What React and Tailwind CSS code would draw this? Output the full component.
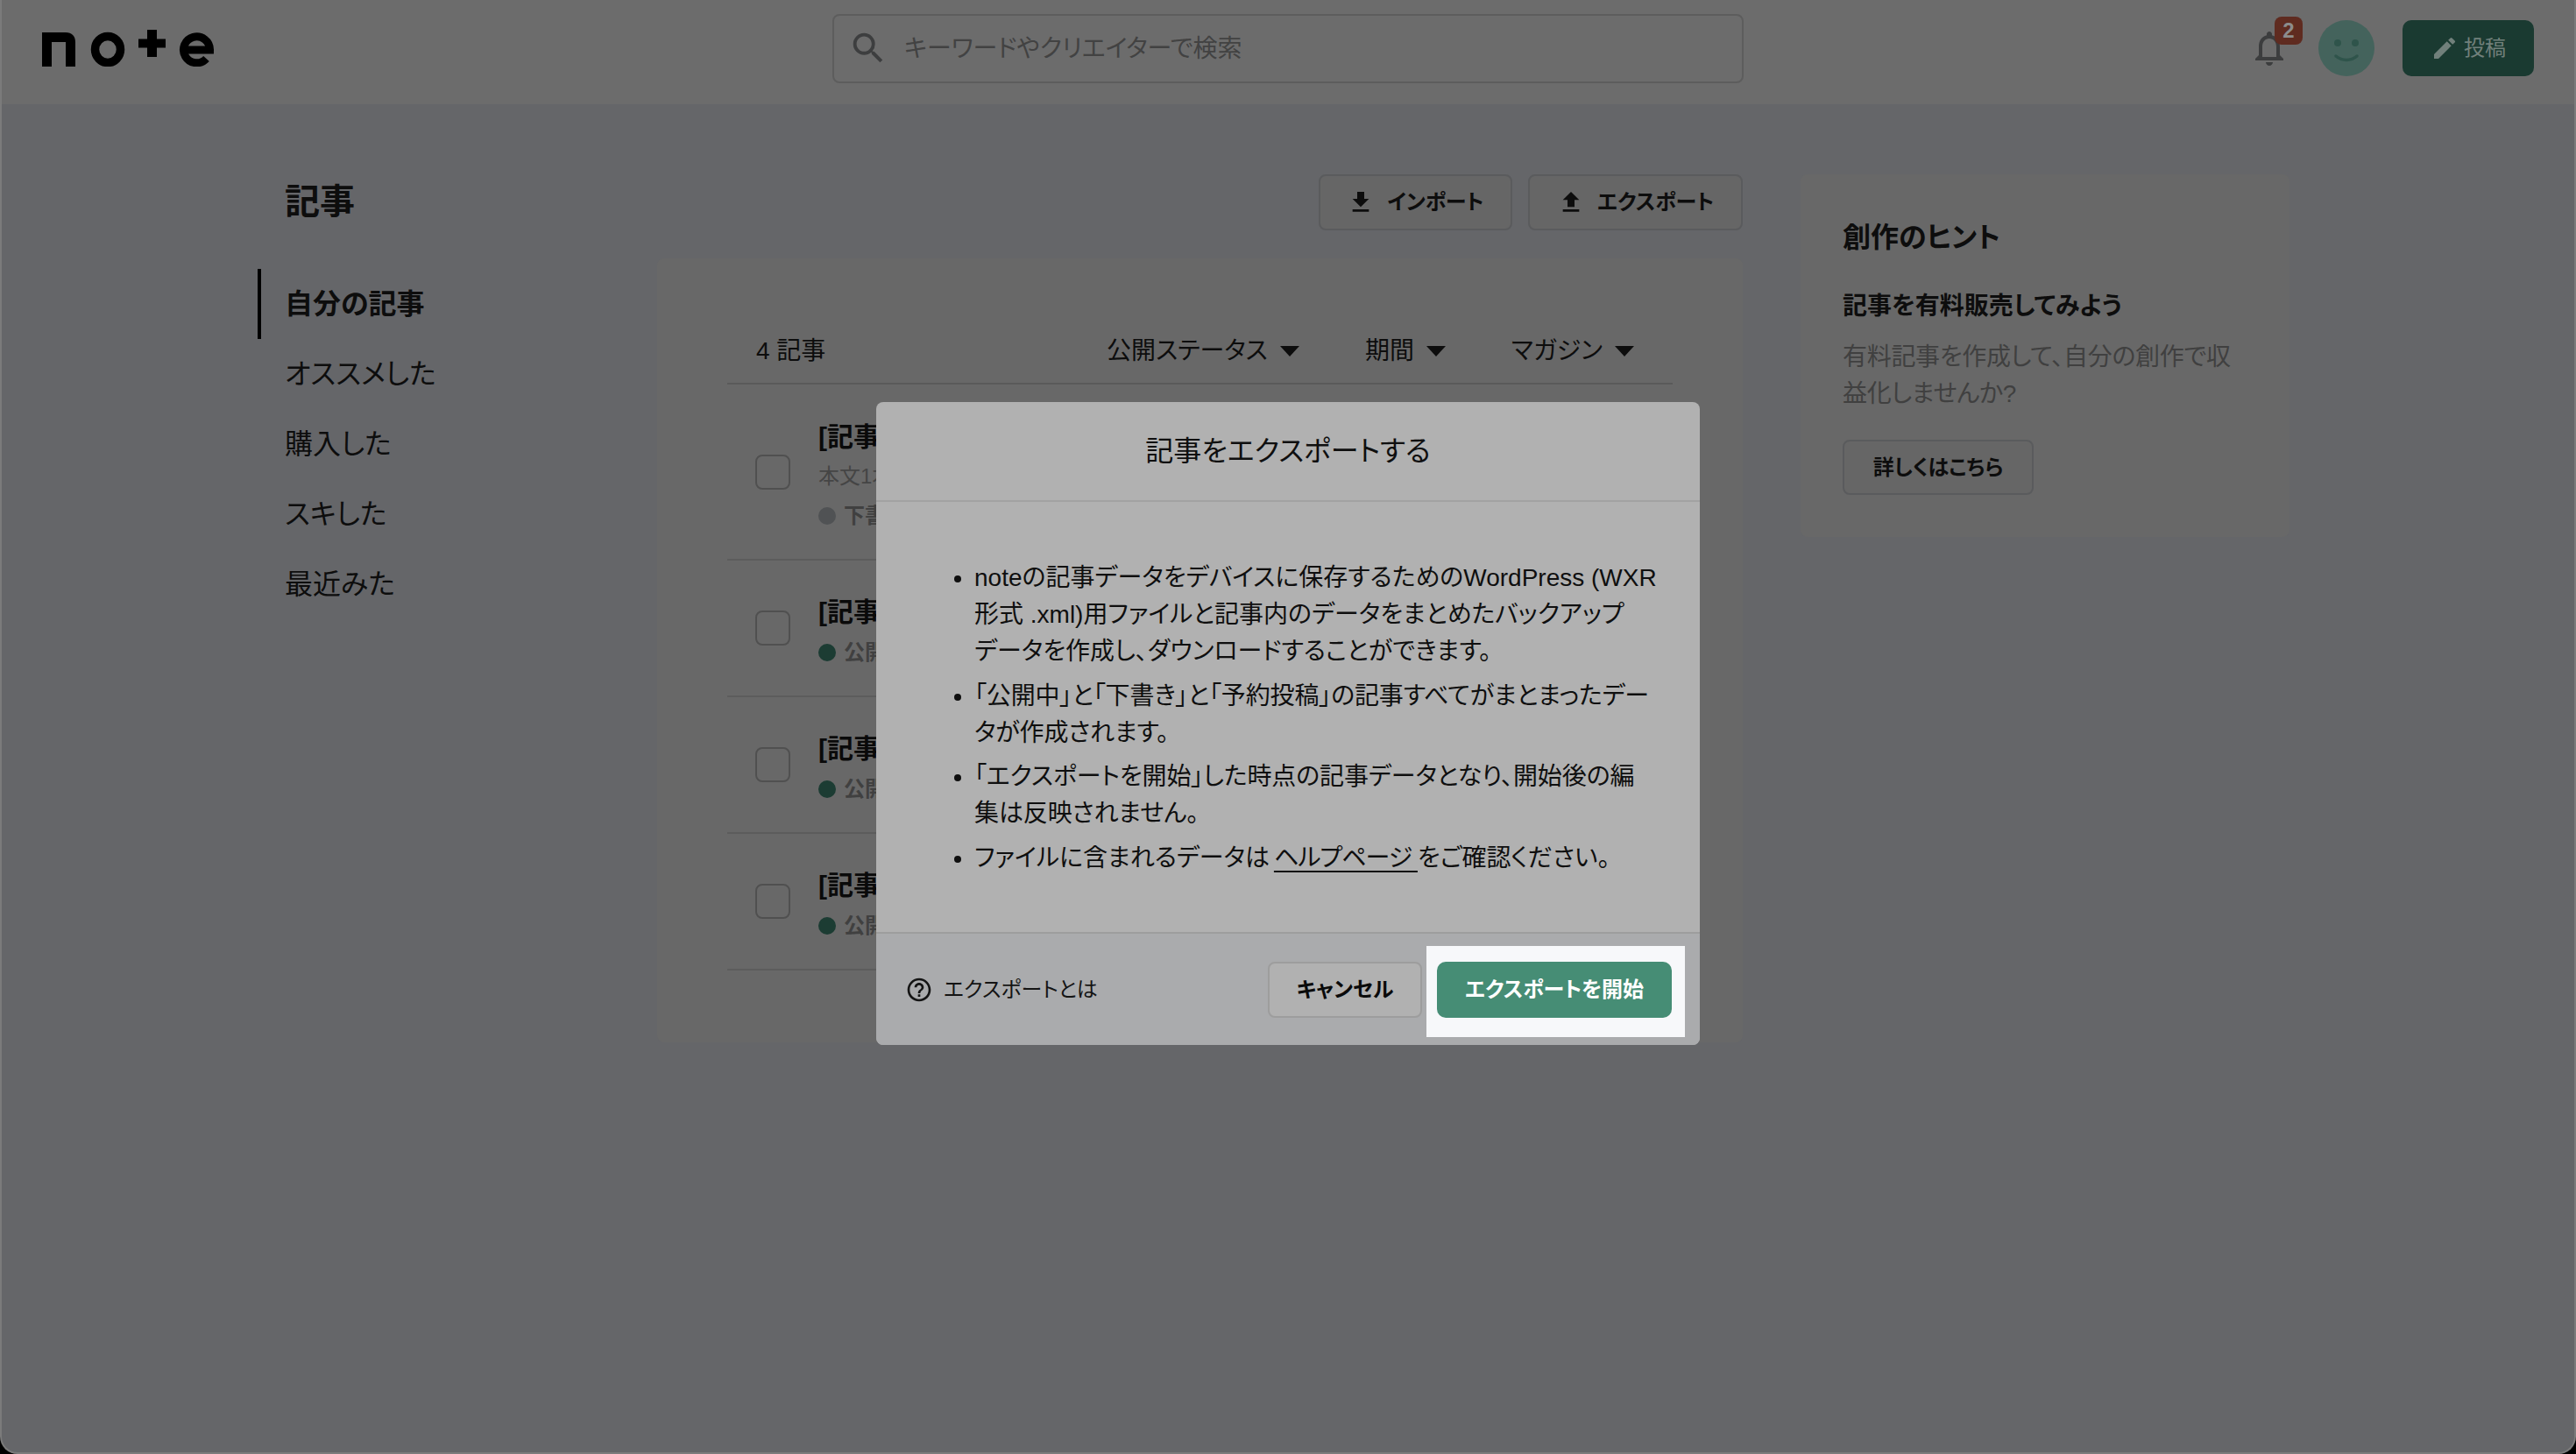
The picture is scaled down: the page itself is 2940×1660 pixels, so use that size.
import React from 'react';
import { MdEdit, MdFileDownload, MdFileUpload, MdOutlineHelpOutline, MdOutlineNotifications, MdSearch } from 'react-icons/md';

const sideNav = [
  { name: '自分の記事', active: true },
  { name: 'オススメした' },
  { name: '購入した' },
  { name: 'スキした' },
  { name: '最近みた' }
];

const articles = [
  { id: 1, body: '本文1本', status: '下書き', draft: true },
  { id: 2, status: '公開中' },
  { id: 3, status: '公開中' },
  { id: 4, status: '公開中' }
];

const Logo = () => (
  <svg width="196" height="42" viewBox="0 0 196 42" className="block">
    <path d="M0 3h27c7 0 11 4 11 11v28H27V14H11v28H0z" fill="#000" />
    <ellipse cx="75" cy="22.5" rx="14.5" ry="15" fill="none" stroke="#000" strokeWidth="9.5" />
    <path d="M120 0h11v10.5h10v10h-10V31h-11V20.500H110v-10h10z" fill="#000" />
    <path d="M162 23h29.500A15 15 0 1 0 187.500 33" fill="none" stroke="#000" strokeWidth="9" />
  </svg>
);

const Caret = () => (
  <svg width="22" height="12" viewBox="0 0 22 12" className="ml-[14px] shrink-0">
    <path d="M0 0h22L11 12z" fill="#0d0d0d" />
  </svg>
);

const Filter = ({ label }) => (
  <div className="flex items-center">
    <span>{label}</span>
    <Caret />
  </div>
);

const ToolButton = ({ icon: Icon, label, width }) => (
  <button type="button" className={`flex h-16 items-center justify-center gap-[14px] rounded-lg border-2 border-[#5a5b5d] bg-[#666666] text-2xl font-bold text-[#0d0d0d] ${width}`}>
    <Icon className="h-8 w-8" />
    {label}
  </button>
);

const ArticleRow = ({ article }) => (
  <div className={`flex items-center border-b-2 border-[#5c5c5c] pl-8 ${article.draft ? 'h-[201px]' : 'h-[156px]'}`}>
    <div className="h-10 w-10 shrink-0 rounded-lg border-2 border-[#505050]" />
    <div className="ml-8 pt-[10px] whitespace-nowrap">
      <p className="text-[30px] leading-[44px] font-bold text-[#0a0a0a]">[記事タイトル]</p>
      {article.body && <p className="text-2xl leading-[46px] text-[#454545]">{article.body}</p>}
      <div className={`flex h-[44px] items-center text-2xl font-bold text-[#404040] ${article.draft ? '' : 'mt-[2px]'}`}>
        <span className={`mr-[9px] h-5 w-5 rounded-full ${article.draft ? 'bg-[#505254]' : 'bg-[#1c3c33]'}`} />
        {article.status}
      </div>
    </div>
  </div>
);

const ExportDialog = () => (
  <div className="absolute top-[459px] left-[1000px] flex h-[734px] w-[940px] flex-col overflow-hidden rounded-lg bg-[#b1b1b1] text-[#0f0f0f]">
    <div className="flex h-[114px] items-center justify-center border-b-2 border-[#a2a2a2] text-[32px]">
      記事をエクスポートする
    </div>
    <ul className="flex-1 list-disc pt-[66px] pl-[112px] text-[28px] leading-[42px] whitespace-nowrap">
      <li className="mb-[8.5px]">noteの記事データをデバイスに保存するためのWordPress (WXR<br />形式 .xml)用ファイルと記事内のデータをまとめたバックアップ<br />データを作成し、ダウンロードすることができます。</li>
      <li className="mb-[8.5px] tracking-[-0.15px]">「公開中」と「下書き」と「予約投稿」の記事すべてがまとまったデー<br />タが作成されます。</li>
      <li className="mb-[8.5px] tracking-[-0.1px]">「エクスポートを開始」した時点の記事データとなり、開始後の編<br />集は反映されません。</li>
      <li>ファイルに含まれるデータは <a className="-ml-[3px] tracking-[-1px] underline decoration-2 underline-offset-[5px] [text-decoration-skip-ink:none]">ヘルプページ&nbsp;</a>をご確認ください。</li>
    </ul>
    <div className="flex h-[129px] items-start border-t-2 border-[#9d9d9d] bg-[#aaabad] pt-[14px] pr-[17px] pl-[33px]">
      <div className="mt-[18px] flex h-16 items-center text-2xl text-[#141414]">
        <MdOutlineHelpOutline className="h-8 w-8" />
        <span className="ml-[12px]">エクスポートとは</span>
      </div>
      <button type="button" className="mt-[18px] ml-auto h-16 w-[176px] rounded-lg border-2 border-[#9d9d9d] bg-[#b1b1b1] text-2xl font-bold text-[#0a0a0a]">
        キャンセル
      </button>
      <div className="ml-[5px] bg-[#f7f8fa] pt-[18px] pr-[15px] pb-[22px] pl-3">
        <button type="button" className="h-16 w-[268px] rounded-[10px] bg-[#468d75] text-2xl font-bold text-white">
          エクスポートを開始
        </button>
      </div>
    </div>
  </div>
);

export default function App() {
  return (
    <div className="relative h-[1660px] w-[2940px] overflow-hidden bg-black [font-family:'Liberation_Sans','Noto_Sans_CJK_JP',sans-serif] [font-feature-settings:'palt']">
      <div className="h-full rounded-b-[20px] border-x-2 border-b-2 border-[#7b7b7b] bg-[#656669]">
        <header className="flex h-[119px] items-center bg-[#6c6c6c] pr-[46px] pb-[9px] pl-[46px]">
          <Logo />
          <div className="ml-[706px] flex h-[79px] w-[1040px] items-center rounded-lg border-2 border-[#5d5d5d] pl-[16px] text-[28px] text-[#424242]">
            <MdSearch className="h-[46px] w-[46px] text-[#3d3e3f]" />
            <span className="mt-[2px] ml-[18px]">キーワードやクリエイターで検索</span>
          </div>
          <div className="ml-auto flex items-center gap-8">
            <div className="relative -ml-[4px] h-12 w-12">
              <MdOutlineNotifications className="h-12 w-12 text-[#3c3d3e]" />
              <span className="absolute -top-[12px] left-[30px] flex h-8 w-8 items-center justify-center rounded-lg bg-[#5f2b20] text-2xl font-bold text-[#8c8c8c]">2</span>
            </div>
            <svg width="64" height="64" viewBox="0 0 64 64">
              <circle cx="32" cy="32" r="32" fill="#44635c" />
              <circle cx="22" cy="26" r="4" fill="#2f544b" />
              <circle cx="42" cy="26" r="4" fill="#2f544b" />
              <path d="M20 41c7 6 17 6 24 0" fill="none" stroke="#2f544b" strokeWidth="3.500" strokeLinecap="round" />
            </svg>
            <button type="button" className="flex h-16 w-[150px] items-center justify-center gap-[6px] rounded-[10px] bg-[#1a3a31] text-2xl text-[#71807b]">
              <MdEdit className="h-8 w-8" />
              投稿
            </button>
          </div>
        </header>

        <main className="flex pt-20 pl-[292px] text-[#0d0d0d]">
          <aside className="w-[456px] shrink-0">
            <h1 className="flex h-[60px] items-center pt-[2px] pl-[31px] text-[40px] font-bold">記事</h1>
            <nav className="mt-[48px]">
              {sideNav.map((item) => (
                <div
                  key={item.name}
                  className={`flex h-20 items-center border-l-4 pl-[27px] text-[32px] ${item.active ? 'border-black font-bold' : 'border-transparent'}`}
                >
                  {item.name}
                </div>
              ))}
            </nav>
          </aside>

          <section className="w-[1239px] shrink-0">
            <div className="flex justify-end gap-[18px]">
              <ToolButton icon={MdFileDownload} label="インポート" width="w-[221px]" />
              <ToolButton icon={MdFileUpload} label="エクスポート" width="w-[245px]" />
            </div>
            <div className="mt-8 h-[895px] rounded-lg bg-[#686868] px-20 pt-16">
              <div className="flex h-20 items-center border-b-2 border-[#5a5a5a] pt-[6px] pr-[44px] pl-[33px] text-[28px]">
                <span>4 記事</span>
                <div className="ml-auto flex gap-[75px]">
                  <Filter label="公開ステータス" />
                  <Filter label="期間" />
                  <Filter label="マガジン" />
                </div>
              </div>
              {articles.map((article) => (
                <ArticleRow key={article.id} article={article} />
              ))}
            </div>
          </section>

          <aside className="ml-[66px] h-[414px] w-[558px] shrink-0 rounded-lg bg-[#686868] pt-12 pl-12">
            <h2 className="text-[32px] leading-[48px] font-bold">創作のヒント</h2>
            <h3 className="mt-[34px] text-[28px] leading-[42px] font-bold">記事を有料販売してみよう</h3>
            <p className="mt-4 w-[470px] text-[28px] leading-[42px] tracking-[-0.3px] text-[#404040]">有料記事を作成して、自分の創作で収益化しませんか?</p>
            <button type="button" className="mt-[31px] h-[63px] w-[218px] rounded-lg border-2 border-[#5a5b5d] bg-[#666666] text-2xl font-bold">
              詳しくはこちら
            </button>
          </aside>
        </main>
      </div>
      <ExportDialog />
    </div>
  );
}
